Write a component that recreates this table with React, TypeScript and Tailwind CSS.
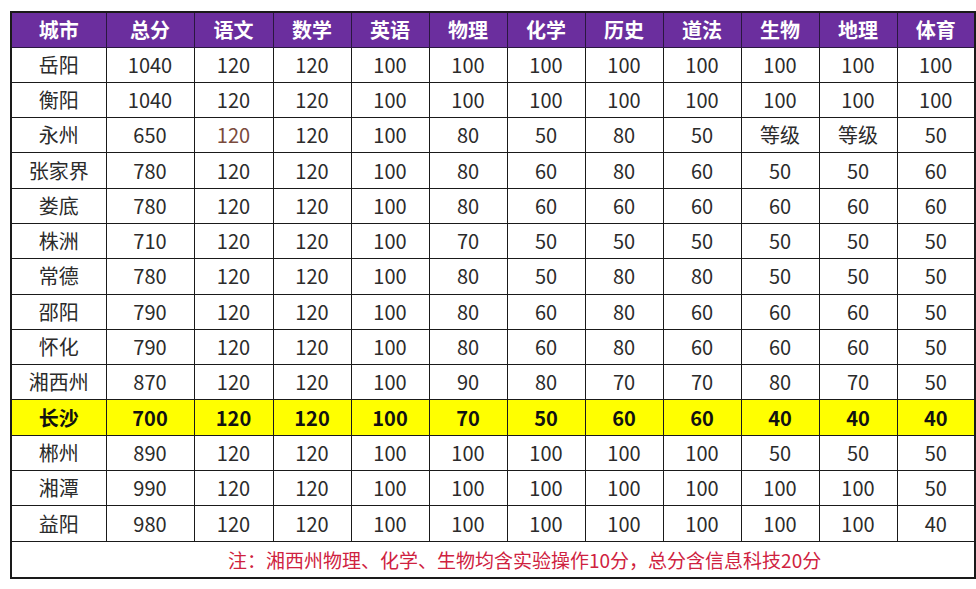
const headers = ["城市", "总分", "语文", "数学", "英语", "物理", "化学", "历史", "道法", "生物", "地理", "体育"];

const rows: (string | number)[][] = [
  ["岳阳", 1040, 120, 120, 100, 100, 100, 100, 100, 100, 100, 100],
  ["衡阳", 1040, 120, 120, 100, 100, 100, 100, 100, 100, 100, 100],
  ["永州", 650, 120, 120, 100, 80, 50, 80, 50, "等级", "等级", 50],
  ["张家界", 780, 120, 120, 100, 80, 60, 80, 60, 50, 50, 60],
  ["娄底", 780, 120, 120, 100, 80, 60, 60, 60, 60, 60, 60],
  ["株洲", 710, 120, 120, 100, 70, 50, 50, 50, 50, 50, 50],
  ["常德", 780, 120, 120, 100, 80, 50, 80, 80, 50, 50, 50],
  ["邵阳", 790, 120, 120, 100, 80, 60, 80, 60, 60, 60, 50],
  ["怀化", 790, 120, 120, 100, 80, 60, 80, 60, 60, 60, 50],
  ["湘西州", 870, 120, 120, 100, 90, 80, 70, 70, 80, 70, 50],
  ["长沙", 700, 120, 120, 100, 70, 50, 60, 60, 40, 40, 40],
  ["郴州", 890, 120, 120, 100, 100, 100, 100, 100, 50, 50, 50],
  ["湘潭", 990, 120, 120, 100, 100, 100, 100, 100, 100, 100, 50],
  ["益阳", 980, 120, 120, 100, 100, 100, 100, 100, 100, 100, 40],
];

const widths = ["w-[95px]", "w-[88px]", "w-[79px]"];

export default function App() {
  return (
    <div className="w-[976px] h-[589px] bg-white pt-[11px] pl-[10px] font-['Noto_Sans_CJK_SC','Noto_Sans',sans-serif]">
      <table className="table-fixed border-collapse w-[964px] border-2 border-[#1a1a1a]">
        <colgroup>
          {headers.map((h, i) => (
            <col key={h} className={widths[i] ?? "w-[78px]"} />
          ))}
        </colgroup>
        <thead>
          <tr className="h-[35px] bg-[#6b2e9e]">
            {headers.map((h) => (
              <th
                key={h}
                className="border-[1.5px] border-[#2a1740] text-white text-[20px] font-bold leading-none p-0"
              >
                {h}
              </th>
            ))}
          </tr>
        </thead>
        <tbody>
          {rows.map((r) => {
            const hl = r[0] === "长沙";
            return (
              <tr key={r[0] as string} className={`h-[35.3px] ${hl ? "bg-[#ffff00]" : "bg-white"}`}>
                {r.map((c, i) => (
                  <td
                    key={i}
                    className={`border-[1.5px] border-[#1a1a1a] text-center text-[20px] leading-none p-0 ${
                      hl ? "font-bold text-[#111]" : "text-[#2b2b2b]"
                    } ${r[0] === "永州" && i === 2 ? "!text-[#7a4a3c]" : ""}`}
                  >
                    {c}
                  </td>
                ))}
              </tr>
            );
          })}
          <tr className="h-[37px] bg-white">
            <td
              colSpan={12}
              className="border-[1.5px] border-[#1a1a1a] text-left pl-[216px] text-[19px] leading-none text-[#cf2240]"
            >
              注：湘西州物理、化学、生物均含实验操作10分，总分含信息科技20分
            </td>
          </tr>
        </tbody>
      </table>
    </div>
  );
}
